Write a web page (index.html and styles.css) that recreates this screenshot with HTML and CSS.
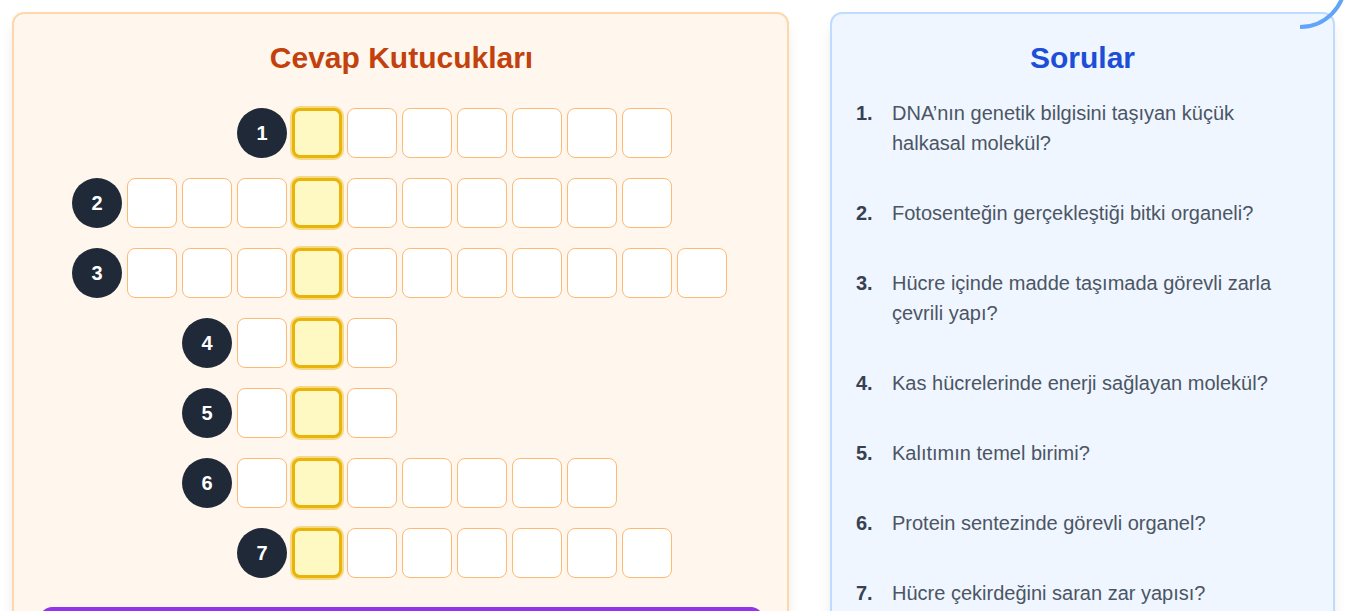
FILE: index.html
```html
<!DOCTYPE html>
<html lang="tr">
<head>
<meta charset="utf-8">
<title>Bulmaca</title>
<link rel="stylesheet" href="styles.css">
</head>
<body>
<div class="page">
  <section class="panel answers">
    <h2 class="title title-orange">Cevap Kutucukları</h2>
    <div class="rows">
      <div class="row"><span class="num s4">1</span><span class="cell hl"></span><span class="cell"></span><span class="cell"></span><span class="cell"></span><span class="cell"></span><span class="cell"></span><span class="cell"></span></div>
      <div class="row"><span class="num s1">2</span><span class="cell"></span><span class="cell"></span><span class="cell"></span><span class="cell hl"></span><span class="cell"></span><span class="cell"></span><span class="cell"></span><span class="cell"></span><span class="cell"></span><span class="cell"></span></div>
      <div class="row"><span class="num s1">3</span><span class="cell"></span><span class="cell"></span><span class="cell"></span><span class="cell hl"></span><span class="cell"></span><span class="cell"></span><span class="cell"></span><span class="cell"></span><span class="cell"></span><span class="cell"></span><span class="cell"></span></div>
      <div class="row"><span class="num s3">4</span><span class="cell"></span><span class="cell hl"></span><span class="cell"></span></div>
      <div class="row"><span class="num s3">5</span><span class="cell"></span><span class="cell hl"></span><span class="cell"></span></div>
      <div class="row"><span class="num s3">6</span><span class="cell"></span><span class="cell hl"></span><span class="cell"></span><span class="cell"></span><span class="cell"></span><span class="cell"></span><span class="cell"></span></div>
      <div class="row"><span class="num s4">7</span><span class="cell hl"></span><span class="cell"></span><span class="cell"></span><span class="cell"></span><span class="cell"></span><span class="cell"></span><span class="cell"></span></div>
    </div>
    <div class="check" role="button" aria-label="Kontrol Et"></div>
  </section>
  <section class="panel questions">
    <h2 class="title title-blue">Sorular</h2>
    <ol class="qlist">
      <li><span class="qn">1.</span><span class="qt">DNA’nın genetik bilgisini taşıyan küçük halkasal molekül?</span></li>
      <li><span class="qn">2.</span><span class="qt">Fotosenteğin gerçekleştiği bitki organeli?</span></li>
      <li><span class="qn">3.</span><span class="qt">Hücre içinde madde taşımada görevli zarla çevrili yapı?</span></li>
      <li><span class="qn">4.</span><span class="qt">Kas hücrelerinde enerji sağlayan molekül?</span></li>
      <li><span class="qn">5.</span><span class="qt">Kalıtımın temel birimi?</span></li>
      <li><span class="qn">6.</span><span class="qt">Protein sentezinde görevli organel?</span></li>
      <li><span class="qn">7.</span><span class="qt">Hücre çekirdeğini saran zar yapısı?</span></li>
    </ol>
  </section>
</div>
<svg class="spinner" width="60" height="40" viewBox="0 0 60 40" aria-hidden="true">
  <path d="M14 27 A45 45 0 0 0 59 -18" fill="none" stroke="#60a5fa" stroke-width="4"/>
</svg>
</body>
</html>
```

FILE: styles.css
```css
* { box-sizing: border-box; }
html, body { margin: 0; padding: 0; background: #ffffff; overflow: hidden; }
body {
  font-family: "Liberation Sans", Arial, Helvetica, sans-serif;
  position: relative;
  height: 611px;
}
.page {
  display: flex;
  align-items: flex-start;
  gap: 41px;
  padding: 12px 0 0 12px;
}
.panel {
  border-radius: 12px;
  box-shadow: 0 10px 15px -3px rgba(0,0,0,0.1), 0 4px 6px -4px rgba(0,0,0,0.1);
}
.answers {
  width: 777px;
  background: #fff7ed;
  border: 2px solid #fed7aa;
  padding: 26px 24px 24px 26px;
}
.questions {
  width: 505px;
  background: #eff6ff;
  border: 2px solid #bfdbfe;
  padding: 26px 24px 24px;
  min-height: 640px;
}
.title {
  margin: 0;
  font-size: 30px;
  line-height: 36px;
  font-weight: 700;
  text-align: center;
}
.title-orange { color: #c2410c; margin-bottom: 32px; }
.title-blue { color: #1d4ed8; margin-bottom: 22px; }

.rows {
  width: 655px;
  margin-left: 32px;
  display: flex;
  flex-direction: column;
  gap: 20px;
}
.row {
  display: grid;
  grid-template-columns: repeat(12, 50px);
  column-gap: 5px;
  height: 50px;
}
.s1 { grid-column-start: 1; }
.s3 { grid-column-start: 3; }
.s4 { grid-column-start: 4; }
.num {
  width: 50px;
  height: 50px;
  border-radius: 50%;
  background: #1f2937;
  color: #ffffff;
  font-weight: 700;
  font-size: 20px;
  display: flex;
  align-items: center;
  justify-content: center;
}
.cell {
  width: 50px;
  height: 50px;
  background: #ffffff;
  border: 1px solid #fdba74;
  border-radius: 8px;
}
.cell.hl {
  background: #fef9c3;
  border: 3px solid #eab308;
  box-shadow: 0 0 0 2px rgba(234,179,8,0.45);
}
.check {
  width: 100%;
  margin-top: 29px;
  height: 56px;
  border-radius: 12px;
  background: #9333ea;
}

.qlist {
  list-style: none;
  margin: 0;
  padding: 0;
  display: flex;
  flex-direction: column;
  gap: 40px;
}
.qlist li {
  display: flex;
  font-size: 20px;
  line-height: 30px;
}
.qn {
  flex: none;
  width: 36px;
  font-weight: 700;
  color: #374151;
}
.qt { color: #4b5563; }

.spinner {
  position: absolute;
  top: 0;
  left: 1286px;
  overflow: visible;
}
```
